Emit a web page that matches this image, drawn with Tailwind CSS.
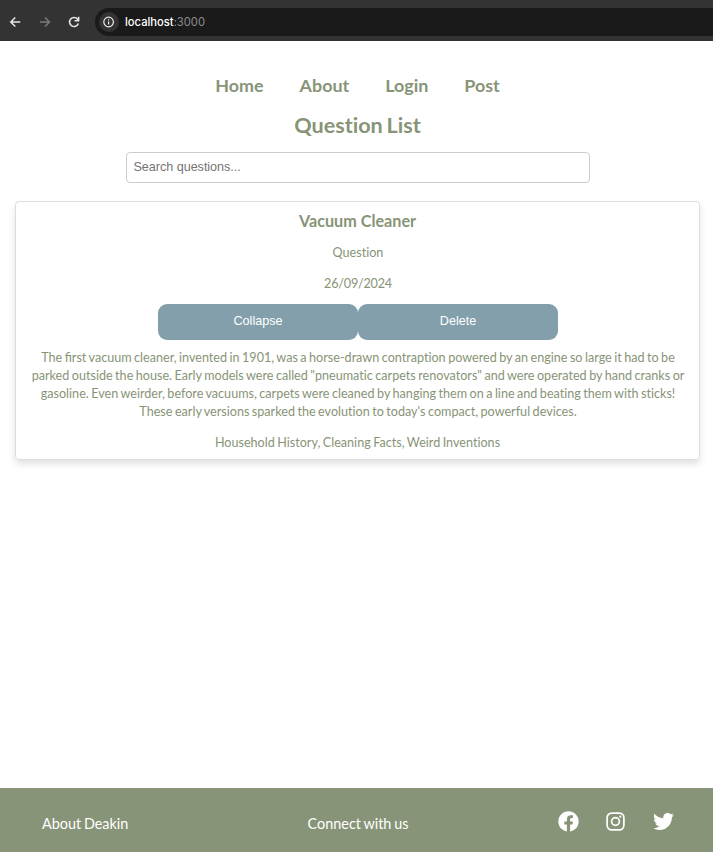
<!DOCTYPE html>
<html lang="en">
<head>
<meta charset="utf-8">
<title>Question List</title>
<script src="https://cdn.jsdelivr.net/npm/@tailwindcss/browser@4"></script>
</head>
<body class="flex h-[852px] w-[713px] flex-col overflow-hidden bg-white font-[Lato,sans-serif] text-[#879477] [font-variant-ligatures:none]">
  <header class="flex h-[41px] shrink-0 items-center bg-[#333333] pt-[3px] pb-px">
    <svg class="ml-[8px] h-[14px] w-[14px] text-[#e8e8e8]" viewBox="0 0 14 14" fill="none" stroke="currentColor" stroke-width="1.5"><path d="M12.3 7H3.3M7.3 2.5 2.8 7 7.3 11.5"/></svg>
    <svg class="ml-[16px] h-[14px] w-[14px] text-[#7c7c7c]" viewBox="0 0 14 14" fill="none" stroke="currentColor" stroke-width="1.5"><path d="M2 7h9M7 2.5 11.5 7 7 11.5"/></svg>
    <svg class="ml-[15px] h-[14px] w-[14px] text-[#e8e8e8]" viewBox="0 0 14 14" fill="none" stroke="currentColor" stroke-width="1.6"><path d="M11.3 8.5A4.5 4.5 0 1 1 10.6 4.2L11.5 5.3"/><path d="M11.6 1.8v4H7.6"/></svg>
    <div class="ml-[14px] flex h-[28px] flex-1 items-center rounded-l-full bg-[#1a1a1a] pl-[4px]">
      <span class="flex h-[20px] w-[20px] items-center justify-center rounded-full bg-[#333333]">
        <svg class="h-[12px] w-[12px]" viewBox="0 0 12 12" fill="none" stroke="#eeeeee" stroke-width="1.2"><circle cx="5.6" cy="6" r="4.8"/><path d="M5.6 5.4v3.2M5.6 3.2v1.2"/></svg>
      </span>
      <span class="ml-[6px] pt-[2px] font-[Inter,sans-serif] text-[11.2px] leading-none font-medium whitespace-nowrap text-white">localhost<span class="font-normal text-[#8c8c8c]">:3000</span></span>
    </div>
  </header>
  <nav class="mt-[33px] flex h-[22px] items-center justify-center gap-[36px] pl-[2px] text-[17.9px] leading-[22px] font-bold">
    <a>Home</a><a>About</a><a>Login</a><a>Post</a>
  </nav>
  <main class="flex flex-1 flex-col items-center pl-[2px]">
    <h1 class="mt-[15px] text-[21.6px] leading-[28px] font-bold [word-spacing:-1.4px]">Question List</h1>
    <input type="text" placeholder="Search questions..." class="mt-[13px] h-[31px] w-[464px] rounded-[4px] border border-[#cccccc] px-[7px] pb-[2px] font-['Liberation_Sans',sans-serif] text-[12.6px] tracking-[-0.03px] placeholder:text-[#757575]">
    <section class="mt-[18px] flex h-[259px] w-[685px] flex-col items-center rounded-[4px] border border-[#dddddd] text-center text-[12.6px] leading-[18px] shadow-[0_4px_7px_rgba(0,0,0,0.12)] [word-spacing:-0.75px]">
      <h2 class="mt-[8px] text-[16.2px] leading-[21px] font-bold [word-spacing:0px]">Vacuum Cleaner</h2>
      <p class="mt-[13px] pl-px">Question</p>
      <p class="mt-[13px] pl-px tracking-[-0.2px]">26/09/2024</p>
      <div class="mt-[11px] flex h-[35.5px] w-[400px] font-['Liberation_Sans',sans-serif] text-[12.6px] text-white">
        <button class="flex-1 rounded-[9px] bg-[#839fab] pb-[2px] pl-px">Collapse</button>
        <button class="flex-1 rounded-[9px] bg-[#839fab] pb-[2px] pl-px">Delete</button>
      </div>
      <p class="mt-[9.5px] whitespace-nowrap pl-px">The <span class="[font-variant-ligatures:normal]">first</span> vacuum cleaner, invented in 1901, was a horse-drawn contraption powered by an engine so large it had to be<br>parked outside the house. Early models were called "pneumatic carpets renovators" and were operated by hand cranks or<br>gasoline. Even weirder, before vacuums, carpets were cleaned by hanging them on a line and beating them with sticks!<br>These early versions sparked the evolution to today's compact, powerful devices.</p>
      <p class="mt-[13px]">Household History, Cleaning Facts, Weird Inventions</p>
    </section>
  </main>
  <footer class="flex h-[64px] shrink-0 items-center justify-between bg-[#879477] pt-[7px] pr-[39px] pl-[42px] text-[14.4px] leading-[18px] text-white [word-spacing:-0.9px]">
    <span class="w-[250px]">About Deakin</span>
    <span>Connect with us</span>
    <div class="flex w-[250px] items-center justify-end gap-[27px] pb-[5px]">
      <svg class="h-[21px] w-[21px]" viewBox="0 0 512 512" fill="currentColor"><path d="M504 256C504 119 393 8 256 8S8 119 8 256c0 123.78 90.69 226.38 209.25 245V327.69h-63V256h63v-54.64c0-62.15 37-96.48 93.67-96.48 27.14 0 55.52 4.84 55.52 4.84v61h-31.28c-30.8 0-40.41 19.12-40.41 38.73V256h68.78l-11 71.69h-57.78V501C413.31 482.38 504 379.78 504 256z"/></svg>
      <svg class="mr-px h-[19px] w-[19px]" viewBox="0 0 19 19" fill="none" stroke="currentColor" stroke-width="1.7"><rect x="1.1" y="1.1" width="16.8" height="16.8" rx="4.6"/><circle cx="9.5" cy="9.5" r="3.9"/><circle cx="14.3" cy="4.7" r="1.1" fill="currentColor" stroke="none"/></svg>
      <svg class="h-[21px] w-[21px]" viewBox="0 0 512 512" fill="currentColor"><path d="M459.37 151.716c.325 4.548.325 9.097.325 13.645 0 138.72-105.583 298.558-298.558 298.558-59.452 0-114.68-17.219-161.137-47.106 8.447.974 16.568 1.299 25.34 1.299 49.055 0 94.213-16.568 130.274-44.832-46.132-.975-84.792-31.188-98.112-72.772 6.498.974 12.995 1.624 19.818 1.624 9.421 0 18.843-1.3 27.614-3.573-48.081-9.747-84.143-51.98-84.143-102.985v-1.299c13.969 7.797 30.214 12.67 47.431 13.319-28.264-18.843-46.781-51.005-46.781-87.391 0-19.492 5.197-37.36 14.294-52.954 51.655 63.675 129.3 105.258 216.365 109.807-1.624-7.797-2.599-15.918-2.599-24.04 0-57.828 46.782-104.934 104.934-104.934 30.213 0 57.502 12.67 76.67 33.137 23.715-4.548 46.456-13.32 66.599-25.34-7.798 24.366-24.366 44.833-46.132 57.827 21.117-2.273 41.584-8.122 60.426-16.243-14.292 20.791-32.161 39.308-52.628 54.253z"/></svg>
    </div>
  </footer>
</body>
</html>
